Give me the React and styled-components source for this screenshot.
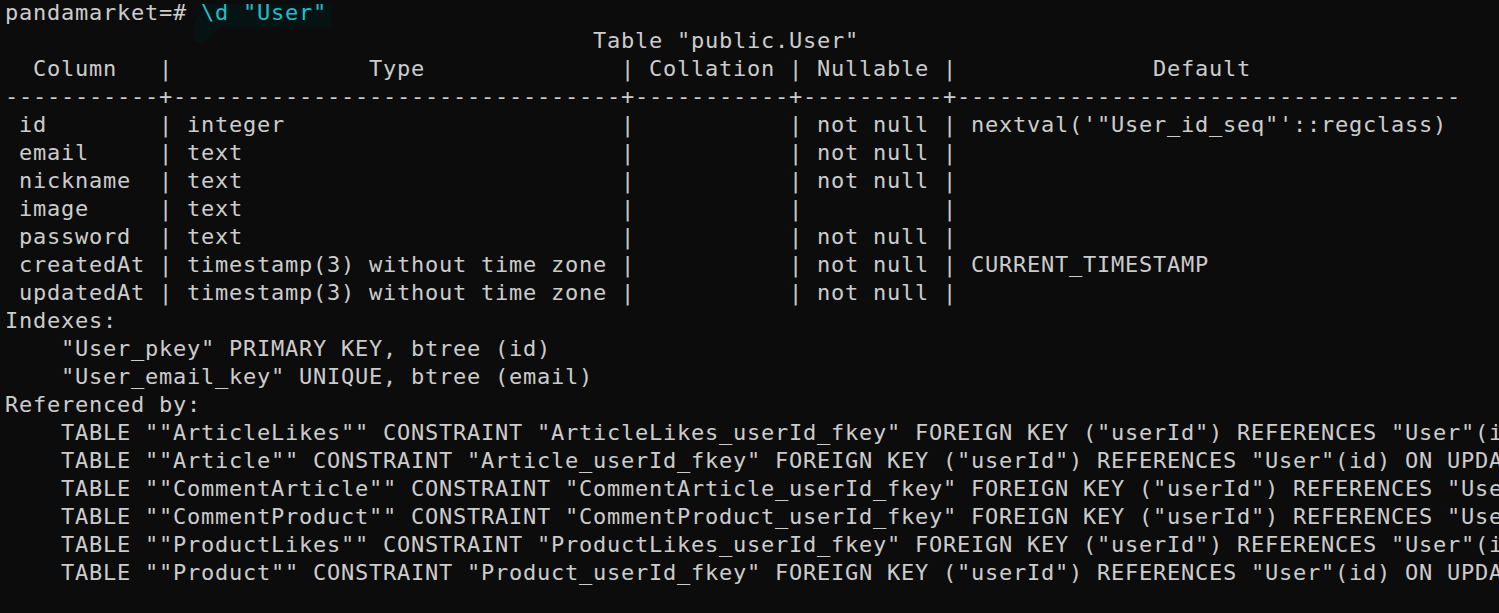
import styled, { createGlobalStyle } from "styled-components";

const GlobalStyle = createGlobalStyle`
  html, body {
    margin: 0;
    padding: 0;
    background: #0c0c0c;
  }
`;

const Screen = styled.div`
  width: 1499px;
  height: 613px;
  overflow: hidden;
  box-sizing: border-box;
  padding: 0 0 0 5px;
  background: #0c0c0c;
  color: #cccccc;
  font-family: "DejaVu Sans Mono", "Liberation Mono", monospace;
  font-size: 22px;
  letter-spacing: 0.755px;
`;

const Line = styled.div`
  height: 28px;
  line-height: 28px;
  white-space: pre;
  margin-top: ${({ $first }) => ($first ? "-1px" : "0")};
`;

const Command = styled.span`
  position: relative;
  color: #1ebfc9;

  /* faint redraw smear left behind by the terminal */
  &::before {
    content: "";
    position: absolute;
    left: -6px;
    top: 4px;
    width: 136px;
    height: 38px;
    background: #061313;
    clip-path: polygon(14px 0, 100% 0, 100% 62%, 26px 62%, 8px 100%, 0 100%, 0 40%);
    z-index: -1;
  }
`;

const Layer = styled.span`
  position: relative;
  z-index: 0;
`;

const widths = [9, 30, 9, 8, 34];

const center = (s, w) => {
  const left = Math.floor((w - s.length) / 2);
  return " ".repeat(left) + s + " ".repeat(w - s.length - left);
};

const row = (cells) =>
  " " + cells.map((c, i) => c.padEnd(widths[i])).join(" | ");

const header =
  " " +
  ["Column", "Type", "Collation", "Nullable", "Default"]
    .map((c, i) => center(c, widths[i]))
    .join(" | ");

const divider = widths.map((w) => "-".repeat(w + 2)).join("+");

const columns = [
  ["id", "integer", "", "not null", `nextval('"User_id_seq"'::regclass)`],
  ["email", "text", "", "not null", ""],
  ["nickname", "text", "", "not null", ""],
  ["image", "text", "", "", ""],
  ["password", "text", "", "not null", ""],
  ["createdAt", "timestamp(3) without time zone", "", "not null", "CURRENT_TIMESTAMP"],
  ["updatedAt", "timestamp(3) without time zone", "", "not null", ""],
];

const refs = [
  ["ArticleLikes", "ArticleLikes_userId_fkey"],
  ["Article", "Article_userId_fkey"],
  ["CommentArticle", "CommentArticle_userId_fkey"],
  ["CommentProduct", "CommentProduct_userId_fkey"],
  ["ProductLikes", "ProductLikes_userId_fkey"],
  ["Product", "Product_userId_fkey"],
];

const tail = [
  "Indexes:",
  `    "User_pkey" PRIMARY KEY, btree (id)`,
  `    "User_email_key" UNIQUE, btree (email)`,
  "Referenced by:",
  ...refs.map(
    ([table, key]) =>
      `    TABLE ""${table}"" CONSTRAINT "${key}" FOREIGN KEY ("userId") REFERENCES "User"(id) ON UPDATE CASCADE ON DELETE CASCADE`
  ),
];

export default function App() {
  return (
    <>
      <GlobalStyle />
      <Screen>
        <Line $first>
          <Layer>
            pandamarket=# <Command>{`\\d "User"`}</Command>
          </Layer>
        </Line>
        <Line>{" ".repeat(42) + `Table "public.User"`}</Line>
        <Line>{header}</Line>
        <Line>{divider}</Line>
        {columns.map((c) => (
          <Line key={c[0]}>{row(c)}</Line>
        ))}
        {tail.map((t, i) => (
          <Line key={i}>{t}</Line>
        ))}
      </Screen>
    </>
  );
}
